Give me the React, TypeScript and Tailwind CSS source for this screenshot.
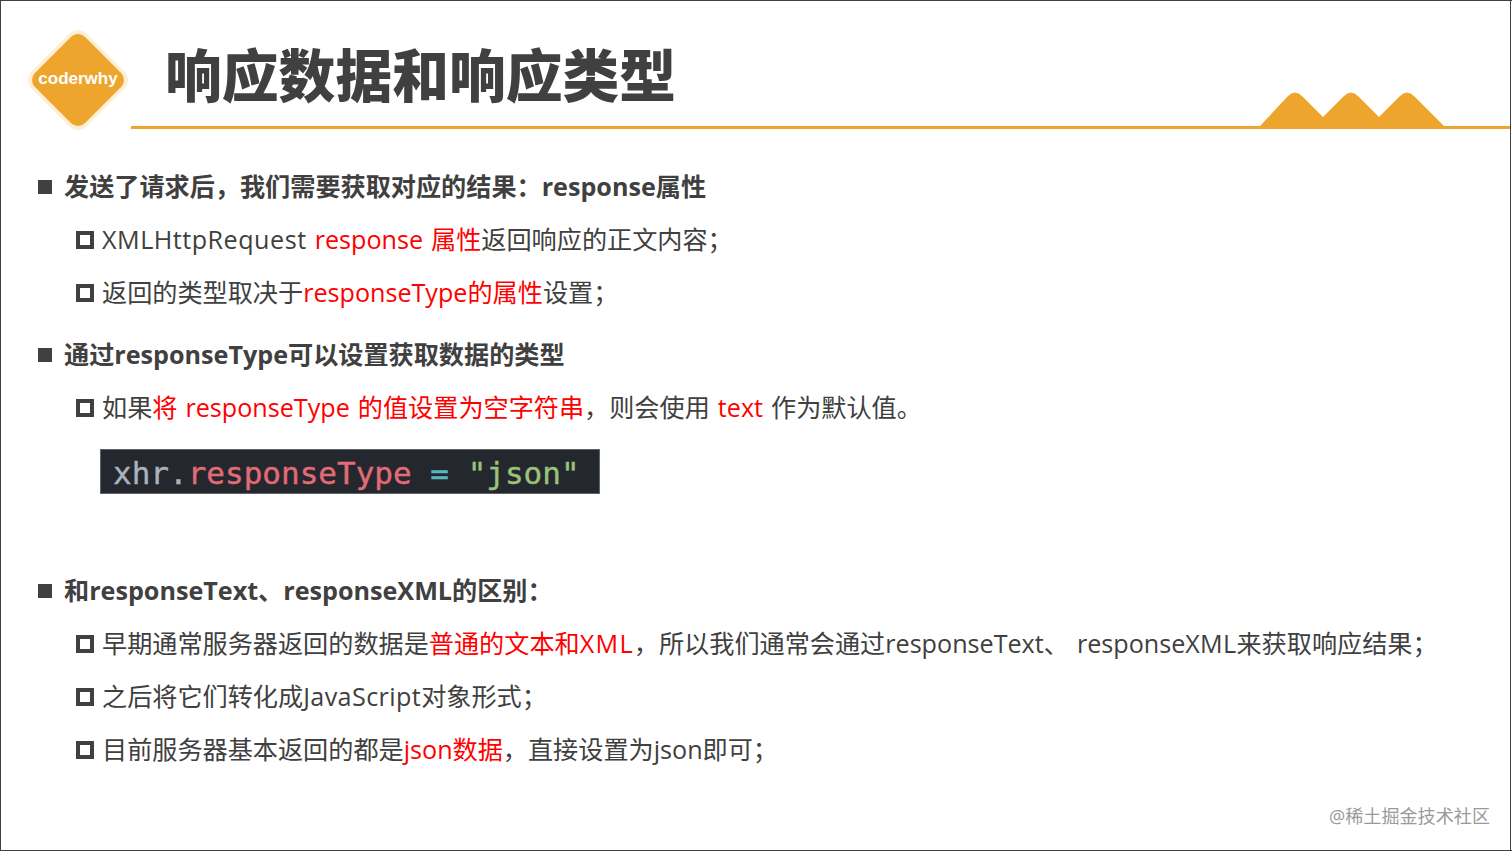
const cjk = "font-['Open_Sans','Noto_Sans_CJK_SC',sans-serif]";

const R: React.FC<{ children: React.ReactNode }> = ({ children }) => (
  <span className="text-[#ff0000]">{children}</span>
);

const Head: React.FC<{ children: React.ReactNode; className?: string }> = ({ children, className }) => (
  <div className={`flex h-[53px] items-center pl-[37px] ${className ?? ""}`}>
    <span className="h-[14px] w-[14px] shrink-0 bg-[#404040]" />
    <span className="ml-[12px] whitespace-nowrap text-[25.15px] font-bold text-[#404040]">{children}</span>
  </div>
);

const Sub: React.FC<{ children: React.ReactNode }> = ({ children }) => (
  <div className="flex h-[53px] items-center pl-[75px]">
    <span className="h-[18px] w-[18px] shrink-0 border-[4px] border-[#404040]" />
    <span className="ml-[8px] whitespace-nowrap text-[25.15px] text-[#404040] [word-spacing:1.5px]">{children}</span>
  </div>
);

const App: React.FC = () => {
  return (
    <div className={`relative h-[851px] w-[1512px] overflow-hidden border-t border-l border-b border-[#404040] bg-white ${cjk}`}>
      {/* Header */}
      <div className="flex h-[129px] items-start pr-[2px]">
        <svg className="ml-[26px] mt-[28px] shrink-0" width="104" height="104" viewBox="0 0 104 104">
          <rect x="12.15" y="12.15" width="77.7" height="77.7" rx="12" transform="rotate(45 51 51)" fill="#fdeed6" />
          <rect x="15.55" y="15.55" width="70.9" height="70.9" rx="10" transform="rotate(45 51 51)" fill="#eea52d" />
          <text x="51" y="55" textAnchor="middle" fontSize="17" fontWeight="700" fill="#ffffff" fontFamily="'Liberation Sans',sans-serif">coderwhy</text>
        </svg>
        <div className="relative flex h-[129px] min-w-0 flex-1 flex-col justify-end">
          <h1 className="absolute left-[34px] top-[40px] whitespace-nowrap text-[56.8px] leading-[68px] font-black text-[#404040]">响应数据和响应类型</h1>
          <svg className="absolute right-[66px] bottom-[1px] overflow-visible" width="184" height="36" viewBox="0 0 184 36">
            <path d="M0 33 L28 3 Q35 -4 42 3 L63 24 L84 3 Q91 -4 98 3 L119 24 L140 3 Q147 -4 154 3 L184 33 L184 36 L0 36Z" fill="#eea52d" />
          </svg>
          <div className="mb-[1px] h-[3px] w-full bg-[#eea52d]" />
        </div>
      </div>

      {/* Content */}
      <div className="pt-[30px]">
        <Head>发送了请求后，我们需要获取对应的结果：response属性</Head>
        <Sub><span className="tracking-[0.5px]">XMLHttpRequest</span> <R>response 属性</R>返回响应的正文内容；</Sub>
        <Sub>返回的类型取决于<R>responseType的属性</R>设置；</Sub>
        <Head className="mt-[9px]">通过responseType可以设置获取数据的类型</Head>
        <Sub>如果<R>将 responseType 的值设置为空字符串</R>，则会使用 <R>text</R> 作为默认值。</Sub>
        <div className="ml-[99px] mt-[15px] flex h-[45px] w-[500px] items-center border border-[#5f6368] bg-[#24272d] pt-[3px] pl-[12px] font-['DejaVu_Sans_Mono',monospace] text-[31px] whitespace-pre [-webkit-text-stroke:0.4px]">
          <span className="text-[#abb2bf]">xhr.</span>
          <span className="text-[#e06c75]">responseType</span>
          <span className="text-[#56b6c2]"> = </span>
          <span className="text-[#98c379]">"json"</span>
        </div>
        <Head className="mt-[70px]">和responseText、responseXML的区别：</Head>
        <Sub>早期通常服务器返回的数据是<R>普通的文本和<span className="tracking-[1.3px]">XML</span></R>，所以我们通常会通过responseText、 response<span className="tracking-[0.3px]">XML</span>来获取响应结果；</Sub>
        <Sub>之后将它们转化成<span className="tracking-[0.4px]">JavaScript</span>对象形式；</Sub>
        <Sub>目前服务器基本返回的都是<R>json数据</R>，直接设置为json即可；</Sub>
      </div>

      {/* Watermark */}
      <div className="absolute right-[22px] bottom-[22px] text-[18.1px] leading-[24px] text-[#9a9a9a]">@稀土掘金技术社区</div>
      <div className="absolute top-0 right-[1px] bottom-0 w-[1px] bg-[#404040]" />
    </div>
  );
};

export default App;
